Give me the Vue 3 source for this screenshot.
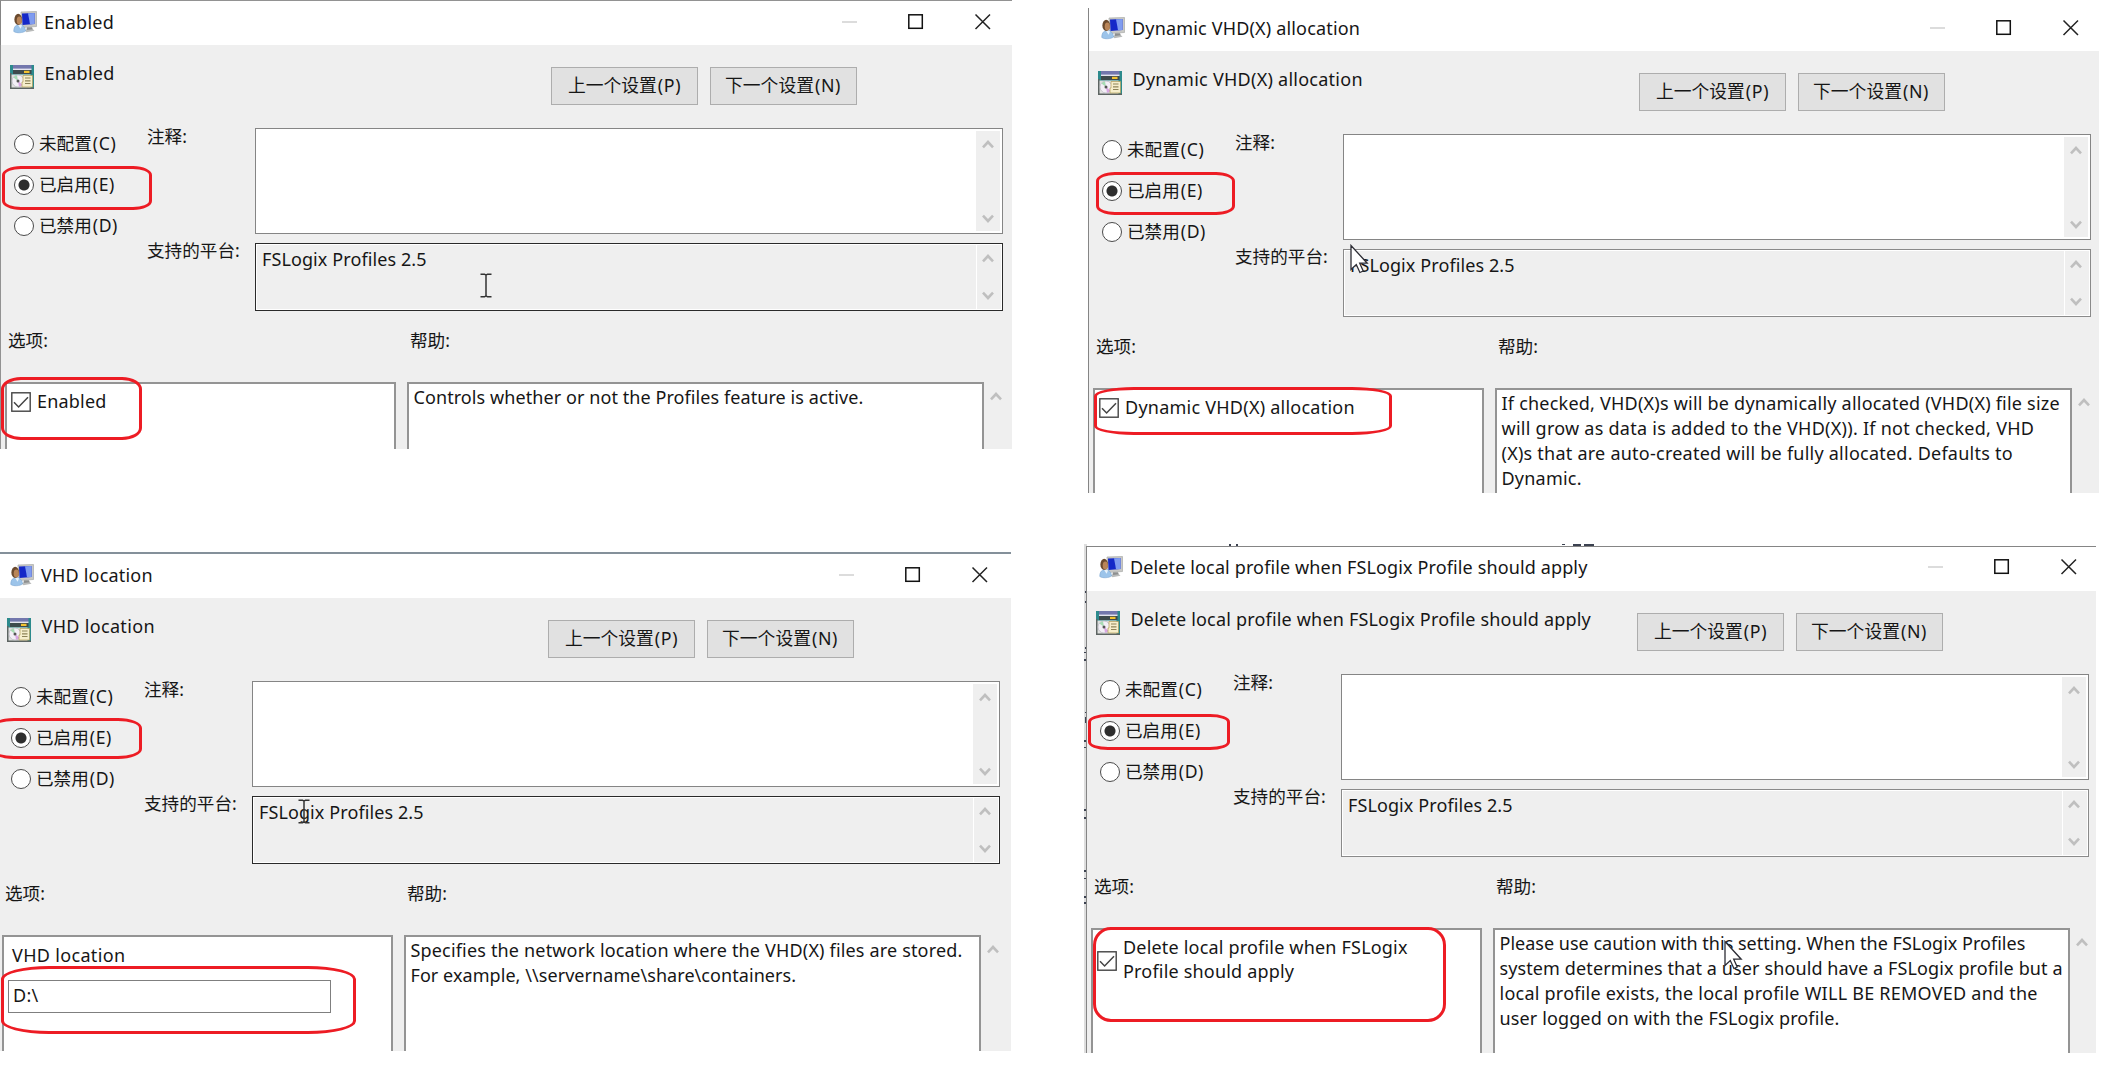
<script setup>
const windows = [
  {
    id: 'w1', x: 0, y: 0, w: 1012, h: 449, title: 'Enabled', titleGap: 0.27, headGap: 0.27,
    focused: true, kind: 'check', option: ['Enabled'], optionGap: 0.2,
    help: [['Controls whether or not the Profiles feature is active.', 0.08]]
  },
  {
    id: 'w2', x: 1088, y: 6, w: 1011, h: 487, title: 'Dynamic VHD(X) allocation', titleGap: 0.17, headGap: 0.26,
    focused: false, kind: 'check', option: ['Dynamic VHD(X) allocation'], optionGap: 0.24,
    help: [
      ['If checked, VHD(X)s will be dynamically allocated (VHD(X) file size', 0.22],
      ['will grow as data is added to the VHD(X)). If not checked, VHD', 0.26],
      ['(X)s that are auto-created will be fully allocated. Defaults to', 0.24],
      ['Dynamic.', 0.22]
    ]
  },
  {
    id: 'w3', x: -3, y: 553, w: 1014, h: 499, title: 'VHD location', titleGap: 0.2, headGap: 0.33,
    focused: true, kind: 'input', option: ['VHD location'], optionGap: 0.33, value: 'D:\\',
    help: [
      ['Specifies the network location where the VHD(X) files are stored.', 0.17],
      ['For example, \\\\servername\\share\\containers.', 0.06]
    ]
  },
  {
    id: 'w4', x: 1086, y: 546, w: 1010, h: 507, title: 'Delete local profile when FSLogix Profile should apply',
    titleGap: 0.13, headGap: 0.185,
    focused: false, kind: 'check', option: ['Delete local profile when FSLogix', 'Profile should apply'], optionGap: 0.19,
    help: [
      ['Please use caution with this setting. When the FSLogix Profiles', 0.01],
      ['system determines that a user should have a FSLogix profile but a', 0.11],
      ['local profile exists, the local profile WILL BE REMOVED and the', 0.24],
      ['user logged on with the FSLogix profile.', 0.13]
    ]
  }
]

const states = [
  { text: '未配置', key: '(C)', on: false },
  { text: '已启用', key: '(E)', on: true },
  { text: '已禁用', key: '(D)', on: false }
]

const marks = [
  { x: 2, y: 166, w: 150, h: 44, rx: 19, ry: 9 },
  { x: 1, y: 377, w: 141, h: 63, rx: 20, ry: 12 },
  { x: 1096, y: 172, w: 139, h: 43, rx: 19, ry: 9 },
  { x: 1094, y: 387, w: 298, h: 48, rx: 40, ry: 9 },
  { x: -10, y: 718, w: 152, h: 41, rx: 24, ry: 10 },
  { x: 1, y: 966, w: 355, h: 68, rx: 48, ry: 13 },
  { x: 1088, y: 714, w: 142, h: 36, rx: 20, ry: 8 },
  { x: 1093, y: 927, w: 353, h: 95, rx: 18, ry: 18 }
]

// Slivers of the window behind the fourth dialog
const slivers = [
  [1, 47, 3, 2], [1, 57, 2, 2], [1, 103, 3, 2], [0, 108, 3, 1], [0, 115, 3, 2], [1, 168, 3, 1],
  [1, 173, 2, 6], [0, 196, 3, 2], [0, 203, 3, 1], [2, 225, 2, 8], [0, 265, 3, 2], [0, 273, 3, 2],
  [2, 295, 2, 8], [0, 326, 3, 2], [0, 334, 3, 1], [0, 352, 3, 2], [0, 358, 3, 2],
  [145, 0, 2, 2], [152, 0, 2, 2], [478, 0, 3, 1], [489, 0, 8, 2], [500, 0, 10, 2]
]

const arrows = [{ x: 1350, y: 244 }, { x: 1724, y: 940 }]
const beams = [{ x: 480, y: 273 }, { x: 298, y: 799 }]

const place = (o) => ({ left: o.x + 'px', top: o.y + 'px' })
const box = (o) => ({ ...place(o), width: o.w + 'px', height: o.h + 'px' })
</script>

<template>
  <main class="desk">
    <svg class="behind" width="520" height="510" viewBox="0 0 520 510">
      <rect x="0" y="0" width="3" height="509" fill="#dedede" />
      <rect v-for="(s, i) in slivers" :key="i" :x="s[0]" :y="s[1]" :width="s[2]" :height="s[3]" fill="#3c4250" />
    </svg>

    <section v-for="w in windows" :key="w.id" class="win" :class="w.id" :style="box(w)">
      <header class="bar">
        <svg class="app" width="24" height="24" viewBox="0 0 24 24">
          <path d="M8 1 L23.500 .5 L23.500 15.500 L8.500 16.500Z" fill="#c9c9c6" stroke="#a9aaa8" stroke-width=".7" />
          <path d="M9 2.500 L21.500 2 L21.500 13 L9.500 14Z" fill="#1428c8" />
          <path d="M15 2.200 L21.500 2 L21.500 13 L17 13.300Z" fill="#7f9cf0" />
          <path d="M14 16.200h5l1 2.500-7 1.800z" fill="#8d8f8f" />
          <path d="M11.500 19.200l8.500-1 1.500 1.600-8 1.500z" fill="#b9bbba" />
          <path d="M.8 20.500C.8 15.500 3 13.500 6.500 13.500s6 3 6 6.500c-2.500 2-9 2.400-11.700.5z" fill="#9cc4ea" stroke="#79a5d2" stroke-width=".6" />
          <path d="M5 13.800l2.600 4 1.500-3.600z" fill="#e9f3fb" />
          <ellipse cx="5.200" cy="8.400" rx="3.800" ry="5.600" fill="#6b4a2e" />
          <ellipse cx="6.300" cy="9.600" rx="2.600" ry="4" fill="#b98558" />
        </svg>
        <span class="caption" :style="{ letterSpacing: w.titleGap + 'px' }">{{ w.title }}</span>
        <svg class="controls" width="150" height="17" viewBox="0 0 150 17">
          <path d="M0 9h15" stroke="#d4d4d4" stroke-width="1.600" />
          <rect x="66.800" y="1.800" width="13.500" height="13.500" fill="none" stroke="#111" stroke-width="1.500" />
          <path d="M133.500 1.500l14.500 14.500M148 1.500L133.500 16" stroke="#222" stroke-width="1.500" />
        </svg>
      </header>

      <div class="head">
        <svg class="policy" width="24" height="24" viewBox="0 0 24 24">
          <rect width="24" height="24" fill="#2c8a8c" />
          <rect x="3" y="0" width="18.500" height="4" fill="#7377ad" />
          <rect x="3" y="3.600" width="18.500" height="1.400" fill="#e4e4ee" />
          <rect x="3" y="5" width="18.500" height="4" fill="#3e4a4d" />
          <rect x="14" y="5.800" width="5.500" height="2.200" fill="#f2c230" />
          <path d="M.5 9.500h20v13.500H.5z" fill="#dfe0de" />
          <path d="M0 8v16h24v-1.500H1.500V8z" fill="#5d6462" />
          <circle cx="8" cy="16" r="6" fill="#f3eff6" stroke="#b9b6c0" stroke-width=".7" />
          <path d="M8 16L3.500 12.500A6 6 0 0 1 7 10.300z" fill="#a8dcb4" />
          <path d="M8 16l1 5.700a6 6 0 0 0 3.500-2.200z" fill="#d9a6e2" />
          <circle cx="8" cy="16" r="1.500" fill="#555" />
          <path d="M13 10.500h9.500v11.500H12V17h1z" fill="#f6eecb" stroke="#b29d58" stroke-width=".7" />
          <path d="M15 13h5.500M15 15.800h5.500M15 18.500h5.500" stroke="#8d8358" stroke-width="1.200" />
        </svg>
        <span class="name" :style="{ letterSpacing: w.headGap + 'px' }">{{ w.title }}</span>
        <div class="nav">
          <button class="btn">上一个设置<span class="key">(P)</span></button>
          <button class="btn">下一个设置<span class="key">(N)</span></button>
        </div>
      </div>

      <div class="config">
        <ul class="states">
          <li v-for="s in states" :key="s.key" class="state">
            <i class="radio" :class="{ on: s.on }"></i>
            <span>{{ s.text }}<span class="key">{{ s.key }}</span></span>
          </li>
        </ul>
        <div class="captions">
          <span class="note">注释:</span>
          <span>支持的平台:</span>
        </div>
        <div class="fields">
          <div class="area comment">
            <div class="scroll">
              <svg width="12" height="9" viewBox="0 0 12 9"><path d="M1 7.300L6 2l5 5.300" /></svg>
              <svg width="12" height="9" viewBox="0 0 12 9"><path d="M1 1.700L6 7l5-5.300" /></svg>
            </div>
          </div>
          <div class="area platform" :class="{ focused: w.focused }">
            <span class="value">FSLogix Profiles 2.5</span>
            <div class="scroll">
              <svg width="12" height="9" viewBox="0 0 12 9"><path d="M1 7.300L6 2l5 5.300" /></svg>
              <svg width="12" height="9" viewBox="0 0 12 9"><path d="M1 1.700L6 7l5-5.300" /></svg>
            </div>
          </div>
        </div>
      </div>

      <div class="labels">
        <span class="left">选项:</span>
        <span>帮助:</span>
      </div>

      <div class="panes">
        <div class="pane options" :style="{ letterSpacing: w.optionGap + 'px' }">
          <div v-if="w.kind === 'check'" class="check">
            <svg class="tick" width="20" height="20" viewBox="0 0 20 20">
              <rect x=".8" y=".8" width="18.400" height="18.400" fill="#fff" stroke="#444" stroke-width="1.400" />
              <path d="M3 10.300l4.600 4.700L17 5.300" fill="none" stroke="#444" stroke-width="1.500" />
            </svg>
            <div class="lines"><div v-for="l in w.option" :key="l">{{ l }}</div></div>
          </div>
          <div v-else class="entry">
            <div class="lines">{{ w.option[0] }}</div>
            <div class="input">{{ w.value }}</div>
          </div>
        </div>
        <div class="pane help">
          <div v-for="l in w.help" :key="l[0]" :style="{ letterSpacing: l[1] + 'px' }">{{ l[0] }}</div>
        </div>
        <svg class="more" width="12" height="9" viewBox="0 0 12 9"><path d="M1 7.300L6 2l5 5.300" /></svg>
      </div>
    </section>

    <svg v-for="(b, i) in beams" :key="'b' + i" class="over" :style="place(b)" width="12" height="25" viewBox="0 0 12 25">
      <path d="M.5 1.200h4l1.500 1 1.500-1h4M.5 23.800h4l1.500-1 1.500 1h4M6 2v21" fill="none" stroke="#333" stroke-width="1.500" />
    </svg>
    <svg v-for="(a, i) in arrows" :key="'a' + i" class="over" :style="place(a)" width="19" height="30" viewBox="0 0 19 30">
      <path d="M1 1.500v24l5.300-5 3.600 8 3.300-1.500-3.500-7.800h7.500z" fill="#fff" stroke="#2d2d35" stroke-width="1.300" />
    </svg>
    <i v-for="(m, i) in marks" :key="'m' + i" class="over mark" :style="{ ...box(m), borderRadius: m.rx + 'px / ' + m.ry + 'px' }"></i>
  </main>
</template>

<style>
body {
  margin: 0;
  background: #fff;
}
</style>

<style scoped>
.desk {
  position: relative;
  width: 2116px;
  height: 1080px;
  overflow: hidden;
  background: #fff;
  color: #161616;
  font: 18px/24px "Noto Sans", "Noto Sans CJK SC", sans-serif;
  white-space: nowrap;
}
.desk *,
.desk {
  box-sizing: border-box;
}
.behind {
  position: absolute;
  left: 1084px;
  top: 544px;
}
.win {
  position: absolute;
  overflow: hidden;
  display: flex;
  flex-direction: column;
  background: #efefef;
  box-shadow: inset 1px 0 #858585;
}
.w1 {
  box-shadow: inset 1px 1px #929292;
}
.w2 {
  clip-path: inset(2px 0 0 0);
}
.w3 {
  margin-top: -1px;
}
.bar {
  flex: none;
  height: 45px;
  display: flex;
  align-items: flex-start;
  padding: 11px 0 0 12px;
  background: #fff;
  border-left: 1px solid #858585;
}
.w1 .bar {
  border-top: 1px solid #929292;
  padding-top: 10px;
}
.w3 .bar {
  height: 46px;
  padding-top: 10px;
  border-top: 2px solid #84909a;
}
.w4 .bar {
  border-top: 1px solid #858585;
  padding-top: 9px;
}
.app {
  flex: none;
}
.caption {
  width: 796px;
  margin-left: 7px;
  line-height: 23px;
}
.controls {
  flex: none;
  margin: 2px 0 0 2px;
}
.head {
  flex: none;
  height: 83px;
  display: flex;
  align-items: flex-start;
}
.policy {
  flex: none;
  margin: 20px 0 0 9.500px;
}
.name {
  width: 506.500px;
  margin: 16px 0 0 11px;
  line-height: 24px;
}
.nav {
  display: flex;
  gap: 11.500px;
  margin-top: 22px;
}
.btn {
  width: 147px;
  height: 38px;
  padding: 0;
  border: 1px solid #adadad;
  background: #e1e1e1;
  color: inherit;
  font: 17.800px/32px "Noto Sans", "Noto Sans CJK SC", sans-serif;
  padding-bottom: 2px;
}
.key {
  letter-spacing: 0.6px;
  margin-left: 1px;
}
.config {
  flex: none;
  height: 183px;
  display: flex;
  font-size: 17.600px;
}
.states {
  width: 147px;
  margin: 0;
  padding: 3px 0 0 14px;
  list-style: none;
}
.state {
  height: 41px;
  display: flex;
  align-items: flex-start;
  line-height: 25px;
}
.radio {
  width: 20px;
  height: 20px;
  margin: 3px 5px 0 0;
  border: 1.500px solid #4a4a4a;
  border-radius: 50%;
  background: #fff;
}
.radio.on {
  background: radial-gradient(circle, #2e2e2e 5px, #fff 6px);
}
.captions {
  width: 108px;
  display: flex;
  flex-direction: column;
}
.note {
  margin: -4px 0 90px;
}
.fields {
  width: 748px;
  display: flex;
  flex-direction: column;
  gap: 9px;
}
.area {
  display: flex;
  justify-content: flex-end;
  border: 1px solid #858585;
}
.comment {
  height: 106px;
  background: #fff;
  padding: 2px;
}
.platform {
  height: 68px;
  background: #efefef;
  border-color: #8a8a8a;
  box-shadow: inset 0 0 0 1px #fff;
  padding: 2px;
}
.platform.focused {
  border-color: #2a2a2a;
}
.value {
  flex: 1;
  padding-left: 4px;
  font-size: 18px;
  line-height: 27px;
  letter-spacing: 0.1px;
}
.scroll {
  width: 24px;
  display: flex;
  flex-direction: column;
  align-items: center;
  justify-content: space-between;
  padding: 9px 1px 8px 0;
  background: #efefef;
}
.platform .scroll {
  border-left: 1px solid #fff;
  margin: -1px 0;
  padding-bottom: 9px;
}
.scroll path,
.more path {
  fill: none;
  stroke: #bfbfbf;
  stroke-width: 2.600;
}
.labels {
  flex: none;
  height: 71px;
  display: flex;
  padding: 17px 0 0 8px;
  font-size: 17.600px;
}
.left {
  width: 402px;
}
.panes {
  flex: 1;
  min-height: 0;
  display: flex;
}
.pane {
  border: 2px solid #949494;
  border-bottom: 0;
  background: #fff;
}
.options {
  width: 391px;
  margin-left: 5px;
}
.help {
  width: 577px;
  margin-left: 11px;
  padding: 1px 0 0 4.500px;
  line-height: 25px;
}
.more {
  margin: 10px 0 0 6px;
}
.check {
  display: flex;
  align-items: center;
  gap: 6px;
  padding: 7px 0 0 4px;
}
.check .lines {
  margin: -2px 0 0;
}
.w4 .check {
  padding-top: 8px;
}
.w4 .check .lines {
  margin: -3px 0 0;
}
.entry .lines {
  padding: 6px 0 0 8px;
}
.input {
  width: 323px;
  height: 33px;
  margin: 13px 0 0 4px;
  padding-left: 4px;
  border: 1px solid #7f7f7f;
  line-height: 29px;
}
.over {
  position: absolute;
}
.mark {
  border: 3px solid #ed1c24;
}
</style>
